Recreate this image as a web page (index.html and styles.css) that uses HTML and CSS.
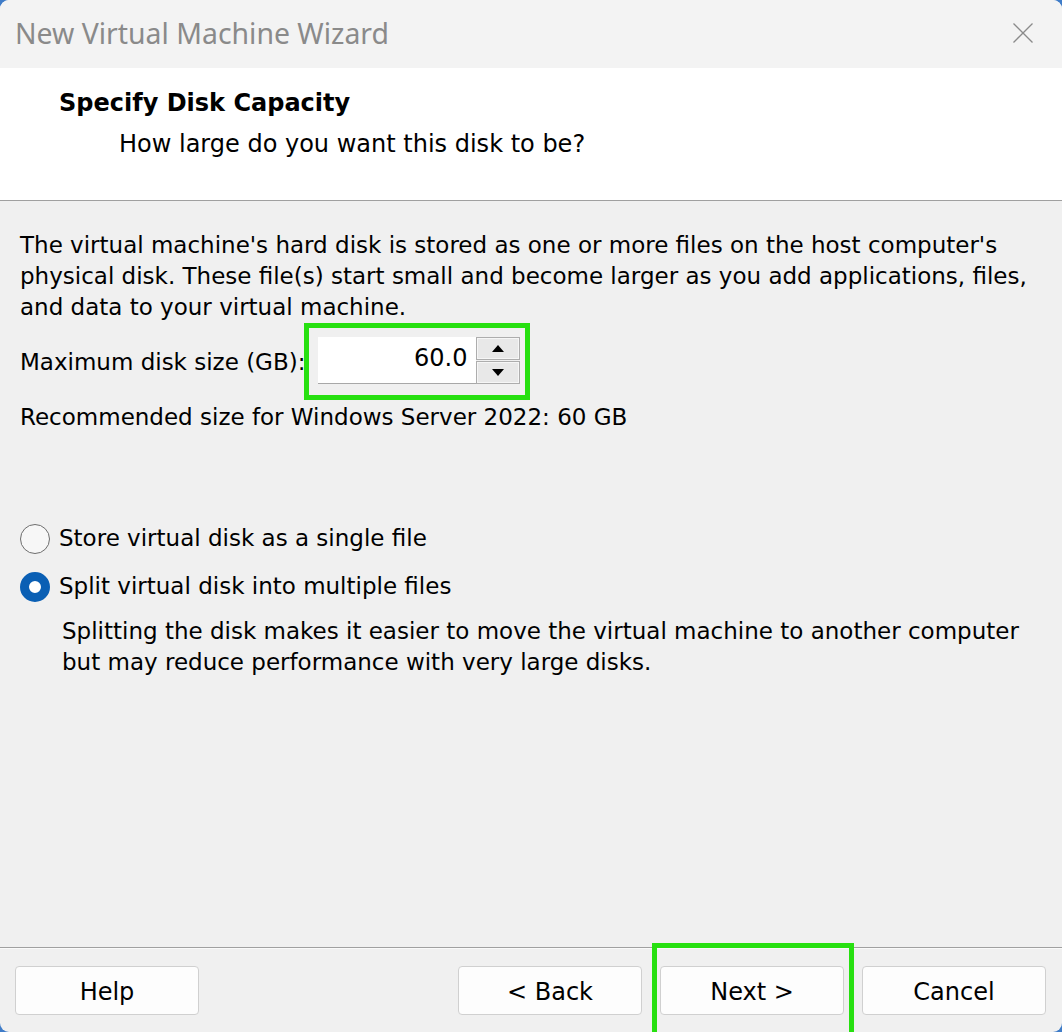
FILE: index.html
```html
<!DOCTYPE html>
<html>
<head>
<meta charset="utf-8">
<link rel="stylesheet" href="styles.css">
</head>
<body>
<div class="window">
  <div class="titlebar">
    <span class="title">New Virtual Machine Wizard</span>
    <svg class="close" width="20" height="20" viewBox="0 0 20 20"><path d="M0.5 0.5 L19.5 19.5 M19.5 0.5 L0.5 19.5" stroke="#8a8a8a" stroke-width="1.3" fill="none"/></svg>
  </div>
  <div class="header">
    <div class="heading">Specify Disk Capacity</div>
    <div class="subheading">How large do you want this disk to be?</div>
  </div>
  <div class="content">
    <p class="para">The virtual machine's hard disk is stored as one or more files on the host computer's physical disk. These file(s) start small and become larger as you add applications, files, and data to your virtual machine.</p>
    <div class="size-row">
      <span class="label">Maximum disk size (GB):</span>
      <div class="highlight">
        <div class="spinner">
          <div class="spin-input">60.0</div>
          <div class="spin-buttons">
            <div class="spin-btn"><svg width="12" height="7" viewBox="0 0 12 7"><path d="M6 0 L12 7 L0 7 Z" fill="#000"/></svg></div>
            <div class="spin-btn"><svg width="12" height="7" viewBox="0 0 12 7"><path d="M0 0 L12 0 L6 7 Z" fill="#000"/></svg></div>
          </div>
        </div>
      </div>
    </div>
    <p class="recommended">Recommended size for Windows Server 2022: 60 GB</p>
    <div class="options">
      <div class="radio-row"><span class="radio"></span><span>Store virtual disk as a single file</span></div>
      <div class="radio-row"><span class="radio checked"></span><span>Split virtual disk into multiple files</span></div>
      <p class="desc">Splitting the disk makes it easier to move the virtual machine to another computer but may reduce performance with very large disks.</p>
    </div>
  </div>
  <div class="footer">
    <button class="btn">Help</button>
    <div class="nav">
      <button class="btn">&lt; Back</button>
      <span class="focus-wrap"><button class="btn">Next &gt;</button></span>
      <button class="btn">Cancel</button>
    </div>
  </div>
</div>
</body>
</html>
```
FILE: styles.css
```css
html, body {
  margin: 0;
  padding: 0;
  width: 1062px;
  height: 1032px;
  overflow: hidden;
  background: #3f7cc8;
}
.window {
  width: 1062px;
  height: 1032px;
  display: flex;
  flex-direction: column;
  background: #f0f0f0;
  border-radius: 9px;
  overflow: hidden;
  font-family: "DejaVu Sans", sans-serif;
  font-size: 23px;
  line-height: 31px;
  color: #000;
}
.titlebar {
  height: 68px;
  flex: none;
  background: #f3f3f3;
  display: flex;
  align-items: center;
  justify-content: space-between;
  padding: 0 29px 0 15px;
}
.title {
  font-family: "Noto Sans", "Open Sans", sans-serif;
  font-size: 28.4px;
  color: #8a8a8a;
  margin-top: -2px;
}
.close { display: block; margin-top: -3px; }
.header {
  height: 133px;
  box-sizing: border-box;
  flex: none;
  background: #fff;
  border-bottom: 1px solid #a0a0a0;
  padding: 0;
  font-size: 24px;
}
.heading {
  font-weight: bold;
  padding: 20px 0 0 59px;
}
.subheading {
  padding: 10px 0 0 119px;
}
.content {
  flex: 1;
  padding: 29px 8px 0 20px;
}
.para { margin: 0; }
.size-row {
  display: flex;
  align-items: center;
}
.label { margin-top: 2px; }
.highlight {
  border: 5px solid #27e010;
  padding: 9px 5px 11px 9px;
  margin-left: -1px;
}
.spinner {
  display: flex;
  align-items: stretch;
}
.spin-input {
  width: 158px;
  height: 47px;
  box-sizing: border-box;
  background: #fff;
  border-bottom: 1px solid #a8a8a8;
  text-align: right;
  padding-right: 9px;
  line-height: 42px;
  font-size: 24px;
}
.spin-buttons {
  display: flex;
  flex-direction: column;
  gap: 1px;
  width: 44px;
}
.spin-btn {
  flex: 1;
  background: #e8e8e8;
  border: 1px solid #adadad;
  box-shadow: inset 0 0 0 1px #f6f6f6;
  display: flex;
  align-items: center;
  justify-content: center;
}
.spin-btn svg { display: block; }
.recommended { margin: 2px 0 0 0; }
.options { margin-top: 82px; }
.radio-row {
  display: flex;
  align-items: center;
  height: 47px;
  gap: 9px;
}
.radio-row + .radio-row { margin-top: 1px; }
.radio {
  width: 30px;
  height: 30px;
  box-sizing: border-box;
  border-radius: 50%;
  border: 1.5px solid #6e6e6e;
  background: #f7f7f7;
  flex: none;
}
.radio.checked {
  border: 9px solid #0a5fb4;
  background: #fff;
}
.desc {
  margin: 6px 0 0 42px;
}
.footer {
  height: 85px;
  box-sizing: border-box;
  flex: none;
  border-top: 1px solid #a0a0a0;
  box-shadow: inset 0 1px 0 #fafafa;
  display: flex;
  justify-content: space-between;
  padding: 18px 16px 0 15px;
}
.nav {
  display: flex;
  gap: 18px;
}
.btn {
  width: 184px;
  height: 49px;
  background: #fdfdfd;
  border: 1px solid #d0d0d0;
  border-radius: 4px;
  font-family: "DejaVu Sans", sans-serif;
  font-size: 24px;
  color: #000;
  padding: 2px 0 0 0;
  margin: 0;
}
.focus-wrap {
  position: relative;
  display: block;
}
.focus-wrap::after {
  content: "";
  position: absolute;
  left: -8px;
  right: -10px;
  top: -23px;
  bottom: -15px;
  border: 5px solid #27e010;
  pointer-events: none;
}
```
